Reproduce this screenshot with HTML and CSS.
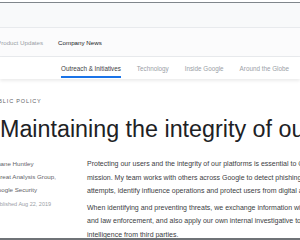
FILE: index.html
```html
<!DOCTYPE html>
<html lang="en">
<head>
    <meta charset="UTF-8">
    <title>Maintaining the integrity of our platforms</title>
    <link rel="stylesheet" href="styles.css">
</head>
<body>
<div class="topbar"></div>
<div class="subnav">
    <span class="subnav-item">Product Updates</span>
    <span class="subnav-item active">Company News</span>
</div>
<div class="tabs">
    <span class="tab active">Outreach &amp; Initiatives</span>
    <span class="tab">Technology</span>
    <span class="tab">Inside Google</span>
    <span class="tab">Around the Globe</span>
</div>

<div class="article">
    <p class="eyebrow">PUBLIC POLICY</p>
    <h1>Maintaining the integrity of our platforms</h1>
    <div class="columns">
        <div class="byline">
            <p>Shane Huntley</p>
            <p>Threat Analysis Group,</p>
            <p>Google Security</p>
            <p class="published">Published Aug 22, 2019</p>
        </div>
        <div class="body">
            <p class="lead">Protecting our users and the integrity of our platforms is essential to Google’s mission. My team works with others across Google to detect phishing attempts, identify influence operations and protect users from digital attacks.</p>
            <p>When identifying and preventing threats, we exchange information with industry and law enforcement, and also apply our own internal investigative tools and intelligence from third parties.</p>
        </div>
    </div>
</div>
<div class="bottombar"></div>
</body>
</html>
```

FILE: styles.css
```css
html, body {
    margin: 0;
    height: 240px;
    overflow: hidden;
}
body {
    font-family: "Liberation Sans", Arial, sans-serif;
    background: #fff;
    position: relative;
}
.topbar {
    margin-top: 2px;
    height: 24px;
    border-top: 1px solid #80868b;
    border-bottom: 1px solid #e8eaed;
    background: #f8f9fa;
}
.subnav {
    height: 28px;
    display: flex;
    align-items: center;
    gap: 15px;
    margin-left: -3px;
    border-bottom: 1px solid #e8eaed;
    background: #fbfbfc;
    font-size: 6.2px;
}
.subnav-item {
    color: #9aa0a6;
}
.subnav-item.active {
    color: #202124;
}
.tabs {
    height: 22px;
    display: flex;
    align-items: flex-start;
    gap: 16px;
    padding-left: 61px;
    box-shadow: 0 2px 3px rgba(0, 0, 0, 0.08);
    font-size: 6.3px;
    white-space: nowrap;
}
.tab {
    color: #9aa0a6;
    padding-top: 8px;
    height: 11px;
}
.tab.active {
    color: #3c4043;
    border-bottom: 2px solid #1a73e8;
}
.article {
    white-space: nowrap;
}
.eyebrow {
    margin: 19px 0 0 -11px;
    font-size: 5.5px;
    letter-spacing: 0.85px;
    color: #5f6368;
}
h1 {
    margin: 11px 0 0 0;
    font-size: 23.3px;
    font-weight: normal;
    color: #202124;
    line-height: 29px;
}
.columns {
    display: flex;
    margin-top: 13px;
}
.byline {
    width: 94px;
    margin-left: -7px;
    flex-shrink: 0;
    font-size: 6.2px;
    color: #5f6368;
}
.byline p {
    margin: 0;
    line-height: 13px;
}
.byline .published {
    margin-top: 2px;
    font-size: 5.5px;
    color: #9aa0a6;
}
.body {
    font-size: 7px;
    color: #3c4043;
    white-space: normal;
    width: 250px;
    flex-shrink: 0;
}
.body p {
    margin: 0 0 3px 0;
    line-height: 13.5px;
}
.body .lead {
    width: 240px;
}
.bottombar {
    position: absolute;
    left: 0;
    right: 0;
    bottom: 0;
    height: 2px;
    background: #6f7377;
}
```
